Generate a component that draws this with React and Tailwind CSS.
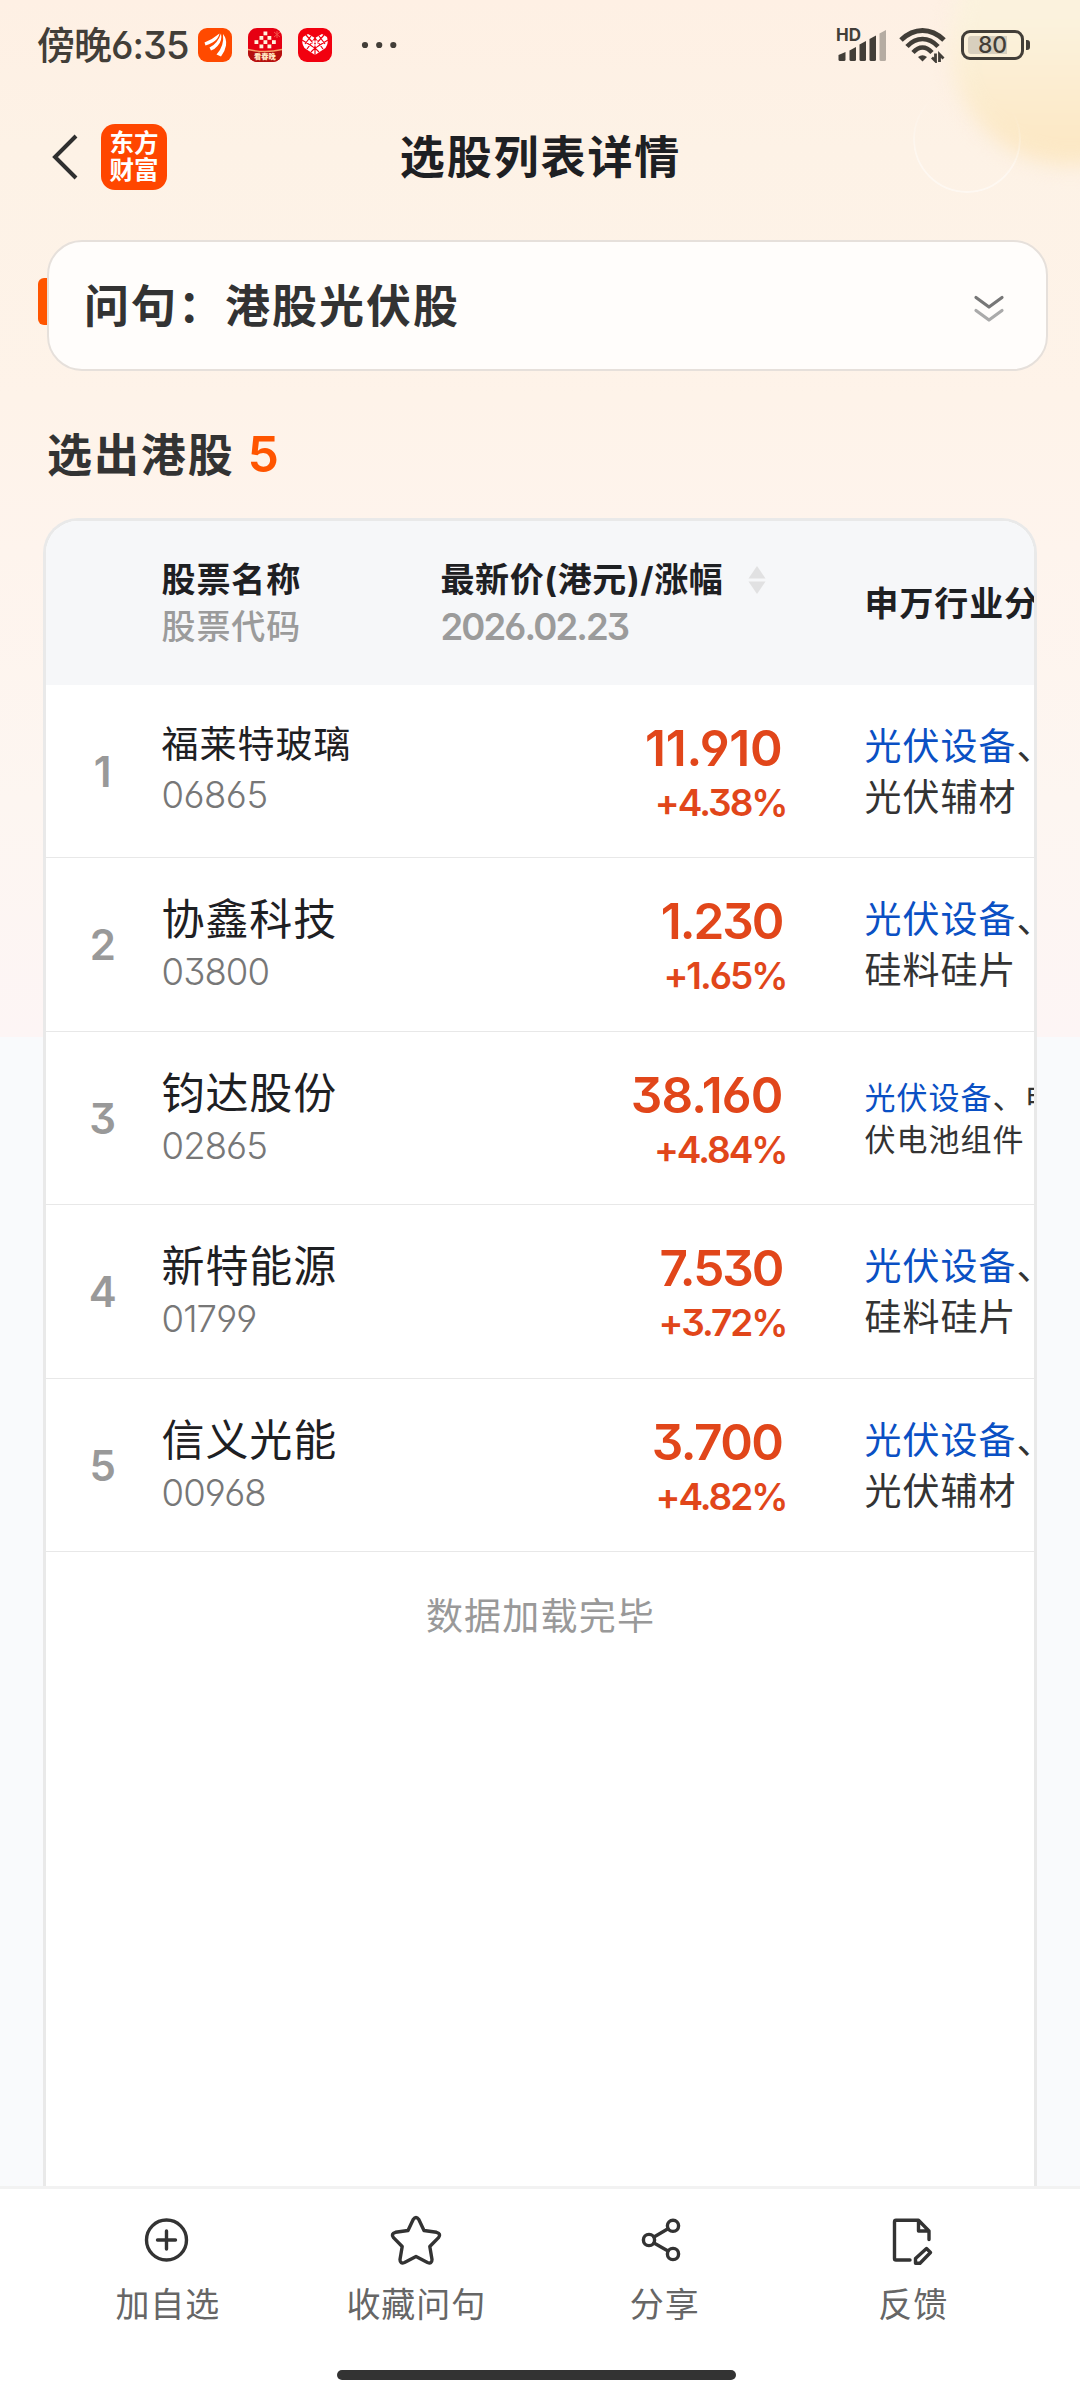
import React from "react";

const rows = [
  { name: "福莱特玻璃", code: "06865", price: "11.910", spacing: "tracking-[-0.200px]", change: "+4.38%", tail: "、", second: "光伏辅材", smallName: true },
  { name: "协鑫科技", code: "03800", price: "1.230", spacing: "tracking-[-2px]", change: "+1.65%", tail: "、", second: "硅料硅片" },
  { name: "钧达股份", code: "02865", price: "38.160", spacing: "tracking-[-0.900px]", change: "+4.84%", tail: "、电", second: "伏电池组件", smallTag: true },
  { name: "新特能源", code: "01799", price: "7.530", spacing: "tracking-[-2px]", change: "+3.72%", tail: "、", second: "硅料硅片" },
  { name: "信义光能", code: "00968", price: "3.700", spacing: "tracking-[-1.500px]", change: "+4.82%", tail: "、", second: "光伏辅材" },
];

function StatusBar() {
  return (
    <div className="flex h-[90px] items-center pl-[37px] text-[#423e38]">
      <span className="w-[161px] whitespace-nowrap text-[38px] leading-[40px] font-medium tracking-[-1px]">傍晚6:35</span>
      <svg className="h-[34px] w-[34px]" viewBox="0 0 34 34">
        <rect width="34" height="34" rx="9" fill="#ff4a00" />
        <g fill="#fff">
          <path d="M6.500 14.500Q15 11 21.500 5.500Q20.500 11 14.500 14.500Q11 16.500 7.500 17.500Z" />
          <path d="M23 5.500Q24.500 13 19.500 18Q16.500 21.500 13 22.500L11.500 19.500Q19.500 16 23 5.500Z" />
          <path d="M25 6Q29 11 28 17.500Q27 23.500 23 28.500L18.500 26.500Q26.500 18 25 6Z" />
        </g>
      </svg>
      <div className="relative ml-4 h-[34px] w-[34px] overflow-hidden rounded-[9px] bg-[#e60012]">
        <svg className="absolute inset-0 h-[34px] w-[34px]" viewBox="0 0 34 34">
          <path d="M0 21Q17 25 34 21V34H0Z" fill="#b5100f" />
          <path d="M0 21.500Q17 25.500 34 21.500" stroke="#f9a06a" strokeWidth="1.500" fill="none" />
          <g fill="#fff3dc">
            <rect x="15.500" y="3.500" width="3.800" height="3.800" />
            <rect x="11.500" y="8" width="3.800" height="3.800" /><rect x="19.500" y="8" width="3.800" height="3.800" />
            <rect x="6.500" y="12.200" width="3.800" height="3.800" /><rect x="15.500" y="12.200" width="3.800" height="3.800" /><rect x="24" y="12.200" width="3.800" height="3.800" />
            <rect x="11.500" y="16.500" width="3.800" height="3.800" /><rect x="19.500" y="16.500" width="3.800" height="3.800" />
          </g>
          <path d="M26 4l6 5M29 3v7M26 9l6-5" stroke="#f4524a" strokeWidth="1" />
        </svg>
        <span className="absolute top-[25px] left-[6px] whitespace-nowrap text-[7.300px] leading-[8px] font-black text-[#ffe6c0]">看春晚</span>
      </div>
      <svg className="ml-4 h-[34px] w-[34px]" viewBox="0 0 34 34">
        <rect width="34" height="34" rx="9" fill="#f2000f" />
        <path d="M17 27L6.500 20Q3 15 5 9L10 6L17 10L24 6L29 9Q31 15 27.500 20Z" fill="#fff" />
        <path d="M4 12L17 20L30 12M8 7l8 9M26 7l-8 9M9 21l8-11l8 11M13 24l4-4l4 4M7 16l6-8M27 16l-6-8M17 8v20" stroke="#f2000f" strokeWidth="1.200" fill="none" />
        <path d="M14 14h6M14 17h6M15.500 12.500v6M18.500 12.500v6" stroke="#fff" strokeWidth="1.100" />
      </svg>
      <svg className="ml-[29px] h-[8px] w-[36px]" viewBox="0 0 36 8" fill="#423e38">
        <circle cx="4" cy="4" r="3.100" /><circle cx="18.200" cy="4" r="3.100" /><circle cx="32.300" cy="4" r="3.100" />
      </svg>
      <div className="relative ml-[439px] h-[34px] w-[52px]">
        <span className="absolute -top-[1px] left-0 text-[17px] leading-[16px] font-bold">HD</span>
        <svg className="h-[34px] w-[52px]" viewBox="0 0 52 34" fill="#423e38">
          <path d="M2.500 27l7-3v7.500a1.500 1.500 0 0 1-1.500 1.500h-4a1.500 1.500 0 0 1-1.500-1.500Z" />
          <path d="M13.500 22.500l6.500-3.500v12.500a1.500 1.500 0 0 1-1.500 1.500h-3.500a1.500 1.500 0 0 1-1.500-1.500Z" />
          <path d="M23.500 16.500l6.500-3.500v18.500a1.500 1.500 0 0 1-1.500 1.500h-3.500a1.500 1.500 0 0 1-1.500-1.500Z" />
          <path d="M33.500 11l6.500-3.500v24a1.500 1.500 0 0 1-1.500 1.500h-3.500a1.500 1.500 0 0 1-1.500-1.500Z" />
          <path d="M43.500 5.500l6.500-3.500v29.500a1.500 1.500 0 0 1-1.500 1.500h-3.500a1.500 1.500 0 0 1-1.500-1.500Z" fill="#b5aca2" />
        </svg>
      </div>
      <svg className="ml-[11px] h-[36px] w-[48px]" viewBox="0 0 48 36" fill="none" stroke="#423e38">
        <path d="M2 13Q12 3.500 23.500 3.500T45 13" strokeWidth="5" />
        <path d="M8 19.500Q15 12 23.500 12T39 19.500" strokeWidth="4.600" />
        <path d="M14 25.500Q18.500 20.500 23.500 20.500T33 25.500" strokeWidth="4.400" />
        <path d="M19 30Q23.500 26.500 28 30L23.500 34.500Z" fill="#423e38" stroke="none" />
        <path d="M36.500 26.500V34L33 30.500M40.500 35V27.500L44.500 31.500" strokeWidth="2.800" />
      </svg>
      <div className="relative ml-[14px] flex h-[30px] w-[63px] items-center justify-center rounded-[9px] border-[3px] border-[#423e38]">
        <div className="absolute top-[3px] left-[4px] h-[18px] w-[39px] rounded-l-[3px] bg-[#d8cfbe]" />
        <span className="relative text-[23px] leading-[24px] font-medium tracking-[-0.2px]">80</span>
        <div className="absolute top-[7px] -right-[9px] h-[10px] w-[4px] rounded-r-[3px] bg-[#423e38]" />
      </div>
    </div>
  );
}

function Header() {
  return (
    <div className="grid h-[150px] grid-cols-[1fr_auto_1fr] pl-[50px]">
      <div className="flex items-start pt-[34px]">
        <svg className="mt-[9px] h-[48px] w-[30px]" viewBox="0 0 30 48">
          <path d="M26 3L5 24L26 45" fill="none" stroke="#2f2f2f" strokeWidth="4" />
        </svg>
        <div className="ml-[21px] flex h-[66px] w-[66px] flex-col items-center justify-center rounded-[14px] bg-[#ff4600] text-[24.500px] leading-[27px] font-bold text-white">
          <span>东方</span>
          <span>财富</span>
        </div>
      </div>
      <h1 className="-ml-[49px] pt-[38px] text-[45px] leading-[60px] font-bold tracking-[1.900px] text-[#1e2023]">选股列表详情</h1>
    </div>
  );
}

function Question() {
  return (
    <div className="flex items-start pl-[38px]">
      <div className="mt-[38px] h-[47px] w-[9px] rounded-l-[6px] bg-[#ff5500]" />
      <div className="flex h-[131px] w-[1001px] items-center justify-between rounded-[35px] border-2 border-[#e6e0db] bg-[#fffdfb] pr-[41px] pl-[35px]">
        <span className="pt-[3px] text-[45px] leading-[60px] font-bold tracking-[2px] text-[#333]">问句：港股光伏股</span>
        <svg className="mt-[6px] h-[30px] w-[32px]" viewBox="0 0 32 30" fill="none" strokeWidth="3.200" strokeLinecap="round" strokeLinejoin="round">
          <path d="M3 3.500L16 13L29 3.500" stroke="#777" />
          <path d="M3 16.500L16 26L29 16.500" stroke="#aaa" />
        </svg>
      </div>
    </div>
  );
}

function TableHead() {
  return (
    <div className="grid h-[163.500px] grid-cols-[115.500px_279px_344px_1fr] bg-[#f6f7f9] text-[34px] leading-[47px] font-bold tracking-[0.900px] whitespace-nowrap text-[#1e2023]">
      <div />
      <div className="pt-[35px]">
        <div>股票名称</div>
        <div className="font-medium text-[#9b9b9b]">股票代码</div>
      </div>
      <div className="pt-[35px]">
        <div className="flex items-center">
          <span className="tracking-[0.600px]">最新价(港元)/涨幅</span>
          <svg className="ml-[25px] h-[28px] w-[18px]" viewBox="0 0 18 28" fill="#e1e1e2">
            <path d="M9 0L17.500 12.500H.5Z" /><path d="M9 28L17.500 15.500H.5Z" />
          </svg>
        </div>
        <div className="pt-[1px] text-[36.500px] font-semibold tracking-[-1.900px] text-[#9b9b9b]">2026.02.23</div>
      </div>
      <div className="overflow-hidden pt-[59px] pl-[80px]">申万行业分</div>
    </div>
  );
}

function Row({ row, index }) {
  return (
    <div className="grid h-[173.500px] grid-cols-[115.500px_279px_344px_1fr] border-b border-[#e8e8e8] whitespace-nowrap">
      <div className="pt-[57px] pr-[2px] text-center text-[42px] leading-[60px] font-semibold text-[#999]">{index}</div>
      <div className={row.smallName ? "pt-[30px]" : "pt-[31px]"}>
        <div className={row.smallName ? "text-[37px] leading-[60px] tracking-[1px] text-[#1e2023]" : "text-[43px] leading-[60px] tracking-[0.900px] text-[#1e2023]"}>{row.name}</div>
        <div className={row.smallName ? "text-[36.500px] leading-[40px] font-light tracking-[-0.500px] text-[#777]" : "text-[36.500px] leading-[47px] font-light tracking-[-0.900px] text-[#777]"}>{row.code}</div>
      </div>
      <div className="pt-[33px] text-right font-semibold text-[#e1461a]">
        <div className="pr-[2px] text-[49.500px] leading-[60px]"><span className={row.spacing}>{row.price}</span></div>
        <div className="-mr-[2px] text-[37px] leading-[50px] tracking-[-2px]">{row.change}</div>
      </div>
      <div className={row.smallTag ? "overflow-hidden pt-[45px] pl-[80px] text-[31px] leading-[42px] tracking-[1px] text-[#333]" : "overflow-hidden pt-[36px] pl-[80px] text-[37px] leading-[51px] tracking-[1px] text-[#333]"}>
        <div><span className="text-[#0a50c4]">光伏设备</span>{row.tail}</div>
        <div>{row.second}</div>
      </div>
    </div>
  );
}

const icon = "h-[54px] w-[54px]";
const stroke = { fill: "none", stroke: "#333", strokeWidth: 3.4, strokeLinejoin: "round", strokeLinecap: "round" };

const actions = [
  {
    label: "加自选",
    art: (
      <svg className={icon} viewBox="0 0 54 54" {...stroke}>
        <circle cx="26.500" cy="27" r="20" />
        <path d="M26.500 18v18M17.500 27h18" />
      </svg>
    ),
  },
  {
    label: "收藏问句",
    art: (
      <svg className={icon} viewBox="0 0 54 54" {...stroke}>
        <path d="M24.200 6.500Q27 2.500 29.800 6.500L35 17.500L47.500 19.300Q52.500 20.800 49.500 24.600L40.800 33.500L43 46.500Q43 51.200 38.500 49.500L27 43.500L15.500 49.500Q11 51.200 11 46.500L13.200 33.500L4.500 24.600Q1.500 20.800 6.500 19.300L19 17.500Z" />
      </svg>
    ),
  },
  {
    label: "分享",
    art: (
      <svg className={icon} viewBox="0 0 54 54" {...stroke}>
        <circle cx="12" cy="27" r="5.600" /><circle cx="36" cy="12.800" r="5.600" /><circle cx="36" cy="41" r="5.600" />
        <path d="M17 24L31 15.800M17 30L31 38" />
      </svg>
    ),
  },
  {
    label: "反馈",
    art: (
      <svg className={icon} viewBox="0 0 54 54" {...stroke}>
        <path d="M24 47H10Q8.500 47 8.500 45.500V9Q8.500 7.300 10 7.300H32.500L43 18V26.500M32.500 8V18H43" />
        <path d="M29.500 50.300V45.500L40.500 35.500L44.500 39.500L34 50.300Z" />
      </svg>
    ),
  },
];

export default function App() {
  return (
    <div className="flex h-[2400px] w-[1080px] flex-col overflow-hidden bg-[#f9fafc] font-['Inter','Noto_Sans_CJK_SC',sans-serif] [font-feature-settings:'cv09','cv03','cv04']">
      <div className="relative flex h-[2189px] flex-col overflow-hidden bg-[linear-gradient(180deg,#fef0e4_0px,#fdf2e6_150px,#fef3e9_400px,#fef4ed_550px,#fdf6f1_800px,#fdf5f5_1037px,#f9fafc_1037px)]">
        <div className="absolute -top-[75px] left-[950px] h-[240px] w-[240px] rounded-full bg-[linear-gradient(180deg,#fbf2dd_40%,#fce8c5_90%)] blur-[10px]" />
        <div className="absolute top-[85px] left-[913px] h-[108px] w-[108px] rounded-full border-2 border-white/45 [mask-image:linear-gradient(190deg,transparent_20%,black_75%)]" />
        <div className="relative flex grow flex-col">
          <StatusBar />
          <Header />
          <Question />
          <h2 className="mt-[54px] h-[60px] pl-[47px] text-[45px] leading-[58px] font-bold tracking-[1.900px] text-[#333]">
            选出港股<span className="ml-[13px] text-[50px] font-semibold text-[#ff5500]">5</span>
          </h2>
          <div className="mx-[43px] mt-[33px] grow overflow-hidden rounded-t-[35px] border-x-[3px] border-t-[3px] border-[#e9e9e9] bg-white">
            <TableHead />
            {rows.map((row, i) => (
              <Row key={row.code} row={row} index={i + 1} />
            ))}
            <div className="pt-[39px] pl-[1px] text-center text-[37px] leading-[51px] tracking-[1.200px] text-[#999]">数据加载完毕</div>
          </div>
        </div>
        <div className="absolute bottom-0 left-0 h-[3px] w-full bg-[#f2f2f2]" />
      </div>
      <div className="flex h-[211px] flex-col bg-white">
        <div className="grid w-full grid-cols-4 px-[43px] pt-[24px]">
          {actions.map((a) => (
            <div key={a.label} className="flex flex-col items-center">
              {a.art}
              <span className="mt-[16px] pl-[1px] text-[34px] leading-[44px] tracking-[0.900px] text-[#666]">{a.label}</span>
            </div>
          ))}
        </div>
        <div className="mt-[43px] ml-[337px] h-[10px] w-[399px] rounded-full bg-[#333]" />
      </div>
    </div>
  );
}
